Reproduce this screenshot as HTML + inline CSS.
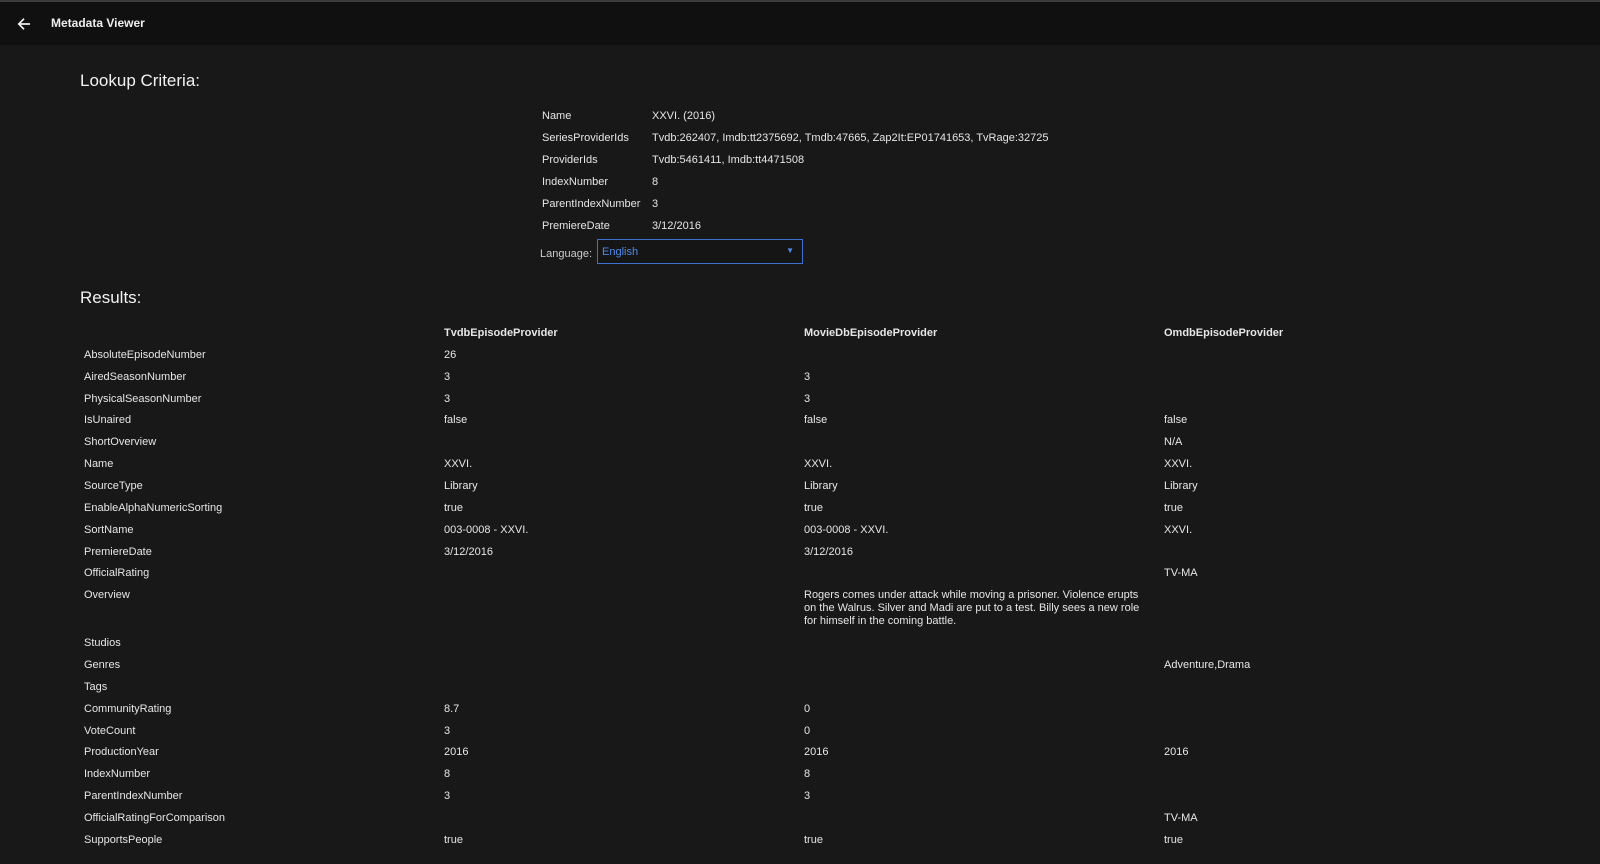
<!DOCTYPE html>
<html><head><meta charset="utf-8"><style>
*{margin:0;padding:0;box-sizing:border-box}
body{width:1600px;height:864px;background:#181818;color:#e6e6e6;font-family:"Liberation Sans",sans-serif;font-size:11px;overflow:hidden;position:relative}
.hdr{position:absolute;left:0;top:0;width:1600px;height:45px;background:#101010;border-top:2px solid #3a3a3a}
.hdr .t{position:absolute;left:51px;top:14px;font-size:12px;font-weight:bold;color:#eee}
h2{position:absolute;font-weight:normal;font-size:17px;color:#f2f2f2}
.a{position:absolute;white-space:nowrap;line-height:13px}
.sel{position:absolute;left:597px;top:239px;width:206px;height:25px;border:1px solid #3b6fd0;background:#151515;color:#4f8ae8;font-size:11px;padding:6px 4px}
.sel i{position:absolute;right:8px;top:6px;font-style:normal;font-size:8px}
</style></head><body>
<div class="hdr">
<svg style="position:absolute;left:15px;top:13px" width="18" height="18" viewBox="0 0 24 24"><path d="M20 12H5M12 5l-7 7 7 7" stroke="#eee" stroke-width="2.2" fill="none"/></svg>
<div class="t">Metadata Viewer</div></div>
<h2 style="left:80px;top:71px">Lookup Criteria:</h2>
<div class="a" style="left:542px;top:110px">Name</div><div class="a" style="left:652px;top:110px">XXVI. (2016)</div>
<div class="a" style="left:542px;top:132px">SeriesProviderIds</div><div class="a" style="left:652px;top:132px">Tvdb:262407, Imdb:tt2375692, Tmdb:47665, Zap2It:EP01741653, TvRage:32725</div>
<div class="a" style="left:542px;top:154px">ProviderIds</div><div class="a" style="left:652px;top:154px">Tvdb:5461411, Imdb:tt4471508</div>
<div class="a" style="left:542px;top:176px">IndexNumber</div><div class="a" style="left:652px;top:176px">8</div>
<div class="a" style="left:542px;top:198px">ParentIndexNumber</div><div class="a" style="left:652px;top:198px">3</div>
<div class="a" style="left:542px;top:220px">PremiereDate</div><div class="a" style="left:652px;top:220px">3/12/2016</div>
<div class="a" style="left:540px;top:248px;color:#ccc">Language:</div>
<div class="sel">English<i>▼</i></div>
<h2 style="left:80px;top:288px">Results:</h2>
<div id="r"></div>
<script>
var rows=[["","TvdbEpisodeProvider","MovieDbEpisodeProvider","OmdbEpisodeProvider"],
["AbsoluteEpisodeNumber","26","",""],["AiredSeasonNumber","3","3",""],["PhysicalSeasonNumber","3","3",""],
["IsUnaired","false","false","false"],["ShortOverview","","","N/A"],["Name","XXVI.","XXVI.","XXVI."],
["SourceType","Library","Library","Library"],["EnableAlphaNumericSorting","true","true","true"],
["SortName","003-0008 - XXVI.","003-0008 - XXVI.","XXVI."],["PremiereDate","3/12/2016","3/12/2016",""],
["OfficialRating","","","TV-MA"],["Overview","","Rogers comes under attack while moving a prisoner. Violence erupts on the Walrus. Silver and Madi are put to a test. Billy sees a new role for himself in the coming battle.",""],
["Studios","","",""],["Genres","","","Adventure,Drama"],["Tags","","",""],["CommunityRating","8.7","0",""],
["VoteCount","3","0",""],["ProductionYear","2016","2016","2016"],["IndexNumber","8","8",""],
["ParentIndexNumber","3","3",""],["OfficialRatingForComparison","","","TV-MA"],["SupportsPeople","true","true","true"]];
var xs=[84,444,804,1164],y=327,h="";
rows.forEach(function(r,i){r.forEach(function(c,j){if(!c)return;var st="left:"+xs[j]+"px;top:"+y+"px;";
if(i==0)st+="font-weight:bold;";if(i==12&&j==2)st+="white-space:normal;width:340px;";
h+='<div class="a" style="'+st+'">'+c+'</div>';});y+=(i==12?48:21.85);});
document.getElementById("r").innerHTML=h;
</script>
</body></html>
